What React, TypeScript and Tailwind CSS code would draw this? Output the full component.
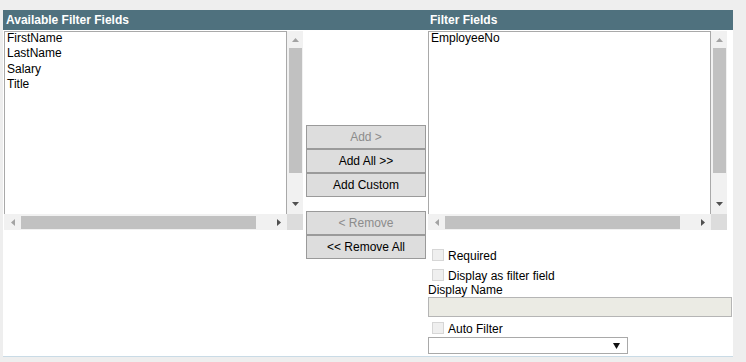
import type { ReactNode } from 'react'

const LEFT_ITEMS = ['FirstName', 'LastName', 'Salary', 'Title']
const RIGHT_ITEMS = ['EmployeeNo']

function Arrow({ dir, dark }: { dir: 'up' | 'down' | 'left' | 'right'; dark?: boolean }) {
  const pts = {
    up: '0,4 7,4 3.5,0',
    down: '0,0 7,0 3.5,4',
    left: '4,0 4,7 0,3.5',
    right: '0,0 0,7 4,3.5',
  }[dir]
  const vertical = dir === 'up' || dir === 'down'
  return (
    <svg width={vertical ? 7 : 4} height={vertical ? 4 : 7} viewBox={vertical ? '0 0 7 4' : '0 0 4 7'}>
      <polygon points={pts} fill={dark ? '#505050' : '#a3a3a3'} />
    </svg>
  )
}

function ScrollList({ items }: { items: string[] }) {
  return (
    <div className="grid grid-cols-[283px_16px] grid-rows-[183px_16px]">
      <div className="bg-white border border-b-0 border-[#a9a9a9] pl-[2px] text-[12px] text-black">
        {items.map(i => (
          <div key={i} className="h-[15.33px] leading-[12px] whitespace-nowrap">{i}</div>
        ))}
      </div>
      {/* vertical scrollbar */}
      <div className="bg-[#f1f1f1] flex flex-col items-center">
        <div className="h-[17px] flex items-center justify-center"><Arrow dir="up" /></div>
        <div className="w-[13px] h-[125px] bg-[#c1c1c1]" />
        <div className="flex-1" />
        <div className="h-[17px] flex items-center justify-center mb-[2px]"><Arrow dir="down" dark /></div>
      </div>
      {/* horizontal scrollbar */}
      <div className="bg-[#f1f1f1] flex items-center">
        <div className="w-[17px] flex justify-center pl-[1px]"><Arrow dir="left" /></div>
        <div className="h-[13px] w-[235px] bg-[#c1c1c1]" />
        <div className="flex-1 flex justify-center pl-[14px]"><Arrow dir="right" dark /></div>
      </div>
      <div className="bg-[#dcdcdc]" />
    </div>
  )
}

function Btn({ children, disabled, className = '' }: { children: ReactNode; disabled?: boolean; className?: string }) {
  return (
    <div
      className={`h-[24px] w-[120px] border border-[#9a9a9a] bg-[#dddddd] flex items-center justify-center text-[12px] ${
        disabled ? 'text-[#8c8c8c]' : 'text-black'
      } ${className}`}
    >
      {children}
    </div>
  )
}

function Check({ label, className = '' }: { label: string; className?: string }) {
  return (
    <div className={`flex items-start pl-[4px] ${className}`}>
      <div className="w-[12px] h-[12px] border border-[#d6d6d6] bg-[#efefef]" />
      <span className="ml-[4px] leading-[14px]">{label}</span>
    </div>
  )
}

export default function App() {
  return (
    <div
      className="h-[362px] w-[746px] bg-[#eeeeee] pt-[10px] pl-[3px] overflow-hidden"
      style={{ fontFamily: '"Liberation Sans", Arial, sans-serif' }}
    >
      <div className="w-[730px] bg-white border-b border-[#c9dbe6] pb-[2px]">
        <div className="flex h-[20px] bg-[#4f717e] text-white font-bold text-[12px] leading-[20px]">
          <div className="w-[425px] pl-[3px]">Available Filter Fields</div>
          <div className="pl-[2px]">Filter Fields</div>
        </div>

        <div className="flex pt-[1px]">
          <div className="ml-[1px]">
            <ScrollList items={LEFT_ITEMS} />
          </div>

          <div className="w-[125px] pl-[3px] pt-[94px]">
            <Btn disabled>Add &gt;</Btn>
            <Btn>Add All &gt;&gt;</Btn>
            <Btn>Add Custom</Btn>
            <Btn disabled className="mt-[14px]">&lt; Remove</Btn>
            <Btn>&lt;&lt; Remove All</Btn>
          </div>

          <div className="w-[305px] text-[12px] text-black">
            <ScrollList items={RIGHT_ITEMS} />
            <Check label="Required" className="mt-[19px]" />
            <Check label="Display as filter field" className="mt-[6px]" />
            <div className="leading-[14px]">Display Name</div>
            <div className="h-[20px] w-[304px] border border-[#b5b5b5] bg-[#ebebe4]" />
            <Check label="Auto Filter" className="mt-[5px]" />
            <div className="mt-[1px] h-[17px] w-[200px] border border-[#a9a9a9] bg-white flex items-center justify-end pr-[7px]">
              <svg width="7" height="6" viewBox="0 0 7 6">
                <polygon points="0,0 7,0 3.5,6" fill="#111" />
              </svg>
            </div>
          </div>
        </div>
      </div>
    </div>
  )
}
